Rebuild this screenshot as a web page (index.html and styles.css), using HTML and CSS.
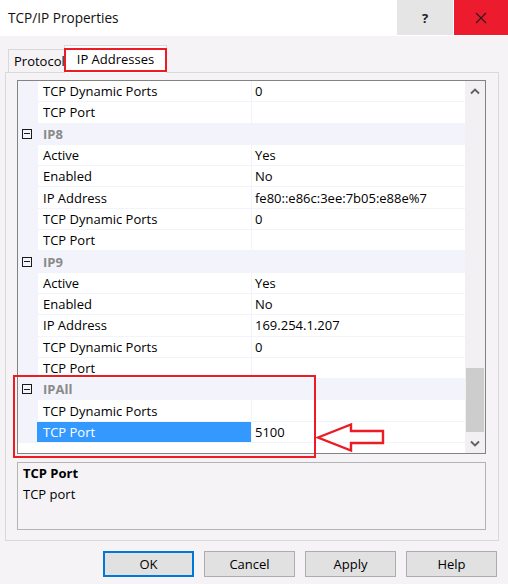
FILE: index.html
```html
<!DOCTYPE html>
<html>
<head>
<meta charset="utf-8">
<link rel="stylesheet" href="styles.css">
</head>
<body>
<div class="window">
  <header class="titlebar">
    <span class="title">TCP/IP Properties</span>
    <div class="cap help">?</div>
    <div class="cap close">
      <svg width="12" height="12" viewBox="0 0 12 12"><path d="M1 1L11 11M11 1L1 11" stroke="#2a1a1a" stroke-width="1.1" fill="none"/></svg>
    </div>
  </header>
  <div class="content">
    <div class="tabs">
      <div class="tab">Protocol</div>
      <div class="tab active">IP Addresses<span class="mark tab-mark"></span></div>
    </div>
    <div class="panel">
      <div class="grid">
        <div class="rows">
          <div class="row"><span class="gut"></span><span class="name">TCP Dynamic Ports</span><span class="val">0</span></div>
          <div class="row"><span class="gut"></span><span class="name">TCP Port</span><span class="val"></span></div>
          <div class="row cat"><span class="gut"><i class="minus"></i></span><span class="name">IP8</span></div>
          <div class="row"><span class="gut"></span><span class="name">Active</span><span class="val">Yes</span></div>
          <div class="row"><span class="gut"></span><span class="name">Enabled</span><span class="val">No</span></div>
          <div class="row"><span class="gut"></span><span class="name">IP Address</span><span class="val">fe80::e86c:3ee:7b05:e88e%7</span></div>
          <div class="row"><span class="gut"></span><span class="name">TCP Dynamic Ports</span><span class="val">0</span></div>
          <div class="row"><span class="gut"></span><span class="name">TCP Port</span><span class="val"></span></div>
          <div class="row cat"><span class="gut"><i class="minus"></i></span><span class="name">IP9</span></div>
          <div class="row"><span class="gut"></span><span class="name">Active</span><span class="val">Yes</span></div>
          <div class="row"><span class="gut"></span><span class="name">Enabled</span><span class="val">No</span></div>
          <div class="row"><span class="gut"></span><span class="name">IP Address</span><span class="val">169.254.1.207</span></div>
          <div class="row"><span class="gut"></span><span class="name">TCP Dynamic Ports</span><span class="val">0</span></div>
          <div class="row"><span class="gut"></span><span class="name">TCP Port</span><span class="val"></span></div>
          <div class="row cat"><span class="gut"><i class="minus"></i></span><span class="name">IPAll</span></div>
          <div class="row"><span class="gut"></span><span class="name">TCP Dynamic Ports</span><span class="val"></span></div>
          <div class="row sel"><span class="gut"></span><span class="name">TCP Port</span><span class="val">5100</span></div>
        </div>
        <div class="scrollbar">
          <div class="sb-btn">
            <svg width="10" height="7" viewBox="0 0 10 7"><path d="M1 5.5L5 1.5L9 5.5" stroke="#606060" stroke-width="1.8" fill="none"/></svg>
          </div>
          <div class="sb-track"><div class="sb-thumb"></div></div>
          <div class="sb-btn">
            <svg width="10" height="7" viewBox="0 0 10 7"><path d="M1 1.5L5 5.5L9 1.5" stroke="#606060" stroke-width="1.8" fill="none"/></svg>
          </div>
        </div>
      </div>
      <div class="desc">
        <div class="desc-title">TCP Port</div>
        <div class="desc-text">TCP port</div>
      </div>
    </div>
    <div class="buttons">
      <button class="btn default">OK</button>
      <button class="btn">Cancel</button>
      <button class="btn">Apply</button>
      <button class="btn">Help</button>
    </div>
  </div>
  <span class="mark group-mark"></span>
  <svg class="arrow" width="74" height="35" viewBox="0 0 74 35">
    <polygon points="4,17.5 37,4.5 37,11 69,11 69,23 37,23 37,30.5" fill="none" stroke="#ed1c24" stroke-width="2.4" stroke-linejoin="miter"/>
  </svg>
</div>
</body>
</html>
```

FILE: styles.css
```css
* { box-sizing: border-box; }
html, body { margin: 0; padding: 0; }
body {
  width: 508px;
  height: 584px;
  overflow: hidden;
  background: #f5f3f6;
  font-family: "Open Sans", "Noto Sans", sans-serif;
  font-size: 13px;
  color: #000;
}
.window {
  position: relative;
  width: 508px;
  height: 584px;
  display: flex;
  flex-direction: column;
}
.titlebar {
  height: 36px;
  background: #fff;
  display: flex;
  align-items: flex-start;
}
.title {
  flex: 1;
  padding-left: 8px;
  line-height: 35px;
  font-size: 13.6px;
  color: #111;
}
.cap {
  height: 35px;
  display: flex;
  align-items: center;
  justify-content: center;
}
.cap.help {
  width: 56px;
  margin-right: 1px;
  background: #e5e5e5;
  font-weight: bold;
  font-size: 13px;
  color: #222;
}
.cap.close {
  width: 54px;
  background: #ec1c2e;
}
.content {
  flex: 1;
  display: flex;
  flex-direction: column;
  padding: 9px 9px 0 5px;
}
.tabs {
  display: flex;
  align-items: flex-end;
  height: 27px;
  padding-left: 3px;
}
.tab {
  position: relative;
  height: 23px;
  padding: 0 0 0 5px;
  width: 57px;
  border: 1px solid #d9d9d9;
  border-bottom: none;
  line-height: 22px;
  white-space: nowrap;
  background: #f5f3f6;
}
.tab.active {
  width: 103px;
  height: 28px;
  margin-left: -1px;
  margin-bottom: -1px;
  padding: 0;
  text-align: center;
  line-height: 26px;
  background: #fff;
  z-index: 1;
}
.mark {
  position: absolute;
  border: 2px solid #ed1c24;
}
.tab-mark {
  left: -1px;
  right: -1px;
  top: 2px;
  bottom: 1px;
}
.panel {
  width: 494px;
  height: 469px;
  border: 1px solid #d9d9d9;
  padding: 7px 12px 10px 11px;
  display: flex;
  flex-direction: column;
}
.grid {
  width: 469px;
  height: 374px;
  border: 1px solid #838383;
  background: #fff;
  display: flex;
}
.rows {
  flex: 1;
  display: flex;
  flex-direction: column;
  background: #fff;
}
.row {
  height: 21.3px;
  flex: none;
  display: grid;
  grid-template-columns: 19px 213px 1fr;
  column-gap: 1px;
  padding-bottom: 1px;
  background: #f3f4fb;
}
.row .name, .row .val {
  background: #fff;
  display: flex;
  align-items: center;
  white-space: nowrap;
  overflow: hidden;
}
.row .name { padding-left: 5px; }
.row .val { padding-left: 3px; }
.row .gut {
  display: flex;
  align-items: center;
  padding-left: 4px;
}
.row.cat .name {
  grid-column: 2 / 4;
  background: transparent;
  color: #8a8a8a;
  font-weight: 700;
}
.minus {
  position: relative;
  display: block;
  width: 10px;
  height: 10px;
  border: 1px solid #1a1a1a;
}
.minus::after {
  content: "";
  position: absolute;
  left: 1px;
  right: 1px;
  top: 3.5px;
  height: 1px;
  background: #1a1a1a;
}
.row.sel .name {
  background: #3399ff;
  color: #fff;
  margin-left: -1px;
  padding-left: 6px;
}
.scrollbar {
  width: 20px;
  display: flex;
  flex-direction: column;
  background: #f2f0f3;
}
.sb-btn {
  height: 20px;
  display: flex;
  align-items: center;
  justify-content: center;
}
.sb-track {
  flex: 1;
  display: flex;
  flex-direction: column;
  justify-content: flex-end;
  padding: 0 1px 1px 1px;
}
.sb-thumb {
  height: 64px;
  background: #cdcdcd;
}
.desc {
  margin-top: 8px;
  width: 469px;
  height: 68px;
  border: 1px solid #b4b4b4;
  padding-left: 5px;
  line-height: 21px;
}
.desc-title { font-weight: 700; }
.buttons {
  margin-top: 10px;
  display: flex;
  justify-content: flex-end;
  gap: 10px;
  padding-right: 2px;
}
.btn {
  width: 91px;
  height: 26px;
  border: 1px solid #adadad;
  background: #e1e1e1;
  font-family: inherit;
  font-size: 13px;
  color: #000;
  padding: 0;
}
.btn.default {
  border: 2px solid #0078d7;
}
.group-mark {
  left: 13px;
  top: 375px;
  width: 303px;
  height: 83px;
}
.arrow {
  position: absolute;
  left: 314px;
  top: 420px;
}
```
